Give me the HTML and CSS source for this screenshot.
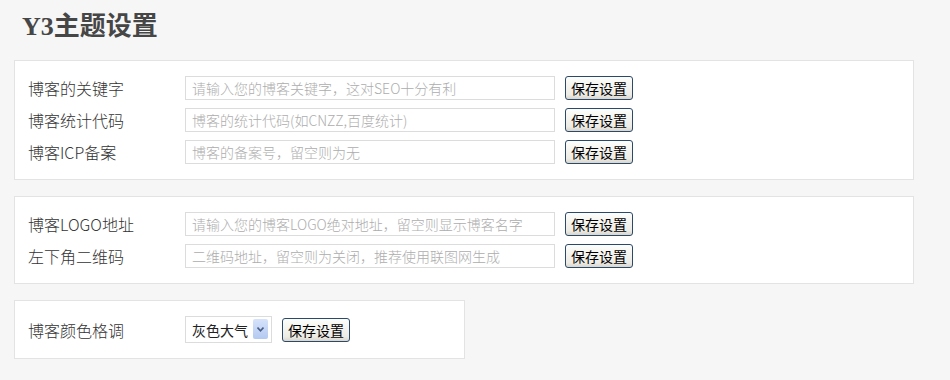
FILE: index.html
```html
<!DOCTYPE html>
<html>
<head>
  <meta charset="utf-8">
  <title>Y3主题设置</title>
  <link rel="stylesheet" href="styles.css">
</head>
<body>
  <h1 class="page-title">Y3主题设置</h1>

  <div class="panel">
    <div class="row">
      <label class="row-label" for="keywords">博客的关键字</label>
      <input class="row-input" type="text" id="keywords" placeholder="请输入您的博客关键字，这对SEO十分有利">
      <button class="save-btn">保存设置</button>
    </div>
    <div class="row">
      <label class="row-label" for="stats">博客统计代码</label>
      <input class="row-input" type="text" id="stats" placeholder="博客的统计代码(如CNZZ,百度统计)">
      <button class="save-btn">保存设置</button>
    </div>
    <div class="row">
      <label class="row-label" for="icp">博客ICP备案</label>
      <input class="row-input" type="text" id="icp" placeholder="博客的备案号，留空则为无">
      <button class="save-btn">保存设置</button>
    </div>
  </div>

  <div class="panel">
    <div class="row">
      <label class="row-label" for="logo">博客LOGO地址</label>
      <input class="row-input" type="text" id="logo" placeholder="请输入您的博客LOGO绝对地址，留空则显示博客名字">
      <button class="save-btn">保存设置</button>
    </div>
    <div class="row">
      <label class="row-label" for="qrcode">左下角二维码</label>
      <input class="row-input" type="text" id="qrcode" placeholder="二维码地址，留空则为关闭，推荐使用联图网生成">
      <button class="save-btn">保存设置</button>
    </div>
  </div>

  <div class="panel panel-small">
    <div class="row row-select">
      <label class="row-label" for="color">博客颜色格调</label>
      <div class="select-wrap">
        <select class="row-select-box" id="color">
          <option>灰色大气</option>
          <option>蓝色清新</option>
        </select>
        <span class="select-arrow">
          <svg width="7" height="5" viewBox="0 0 7 5"><path d="M0.5 0.5 L3.5 3.8 L6.5 0.5" fill="none" stroke="#4a5f86" stroke-width="1.6"/></svg>
        </span>
      </div>
      <button class="save-btn">保存设置</button>
    </div>
  </div>
</body>
</html>
```

FILE: styles.css
```css
body {
  margin: 0;
  padding: 12px 14px;
  background-color: #f6f6f6;
  font-family: "Noto Sans CJK SC", "Liberation Sans", sans-serif;
  color: #333;
}

.page-title {
  margin: 0 0 18px 8px;
  font-family: "Liberation Serif", "Noto Sans CJK SC", serif;
  font-size: 26px;
  line-height: 30px;
  font-weight: bold;
  color: #464646;
}

.panel {
  width: 900px;
  box-sizing: border-box;
  background-color: #fff;
  border: 1px solid #e3e3e3;
  padding: 15px 13px;
  margin-bottom: 16px;
  display: flex;
  flex-direction: column;
  gap: 8px;
}

.panel-small {
  width: 451px;
}

.row {
  display: flex;
  align-items: center;
  height: 24px;
}

.row-select {
  height: 27px;
}

.row-label {
  width: 157px;
  flex-shrink: 0;
  font-size: 16px;
  font-weight: 300;
  color: #333;
}

.row-input {
  width: 370px;
  height: 24px;
  box-sizing: border-box;
  border: 1px solid #dcdcdc;
  padding: 0 6px;
  font-family: "Noto Sans CJK SC", sans-serif;
  font-size: 14px;
  font-weight: 300;
  color: #333;
  outline: none;
}

.row-input::placeholder {
  color: #adadad;
}

.save-btn {
  margin-left: 10px;
  width: 68px;
  height: 24px;
  padding: 0;
  border: 1px solid #2b4a6b;
  border-radius: 3px;
  background: linear-gradient(#fdfdfb, #ecebe5 80%, #d8d6cc);
  font-family: "Noto Sans CJK SC", sans-serif;
  font-size: 14px;
  line-height: 20px;
  color: #000;
  cursor: pointer;
}

.select-wrap {
  position: relative;
  width: 87px;
  height: 27px;
}

.row-select-box {
  appearance: none;
  -webkit-appearance: none;
  width: 100%;
  height: 100%;
  box-sizing: border-box;
  border: 1px solid #dcdcdc;
  background: #fff;
  padding: 0 0 0 6px;
  font-family: "Noto Sans CJK SC", sans-serif;
  font-size: 14px;
  color: #222;
  outline: none;
}

.select-arrow {
  position: absolute;
  right: 4px;
  top: 3px;
  width: 15px;
  height: 20px;
  border-radius: 2px;
  background: linear-gradient(#d6e3fa, #b3c9f2);
  display: flex;
  align-items: center;
  justify-content: center;
  pointer-events: none;
}
```
